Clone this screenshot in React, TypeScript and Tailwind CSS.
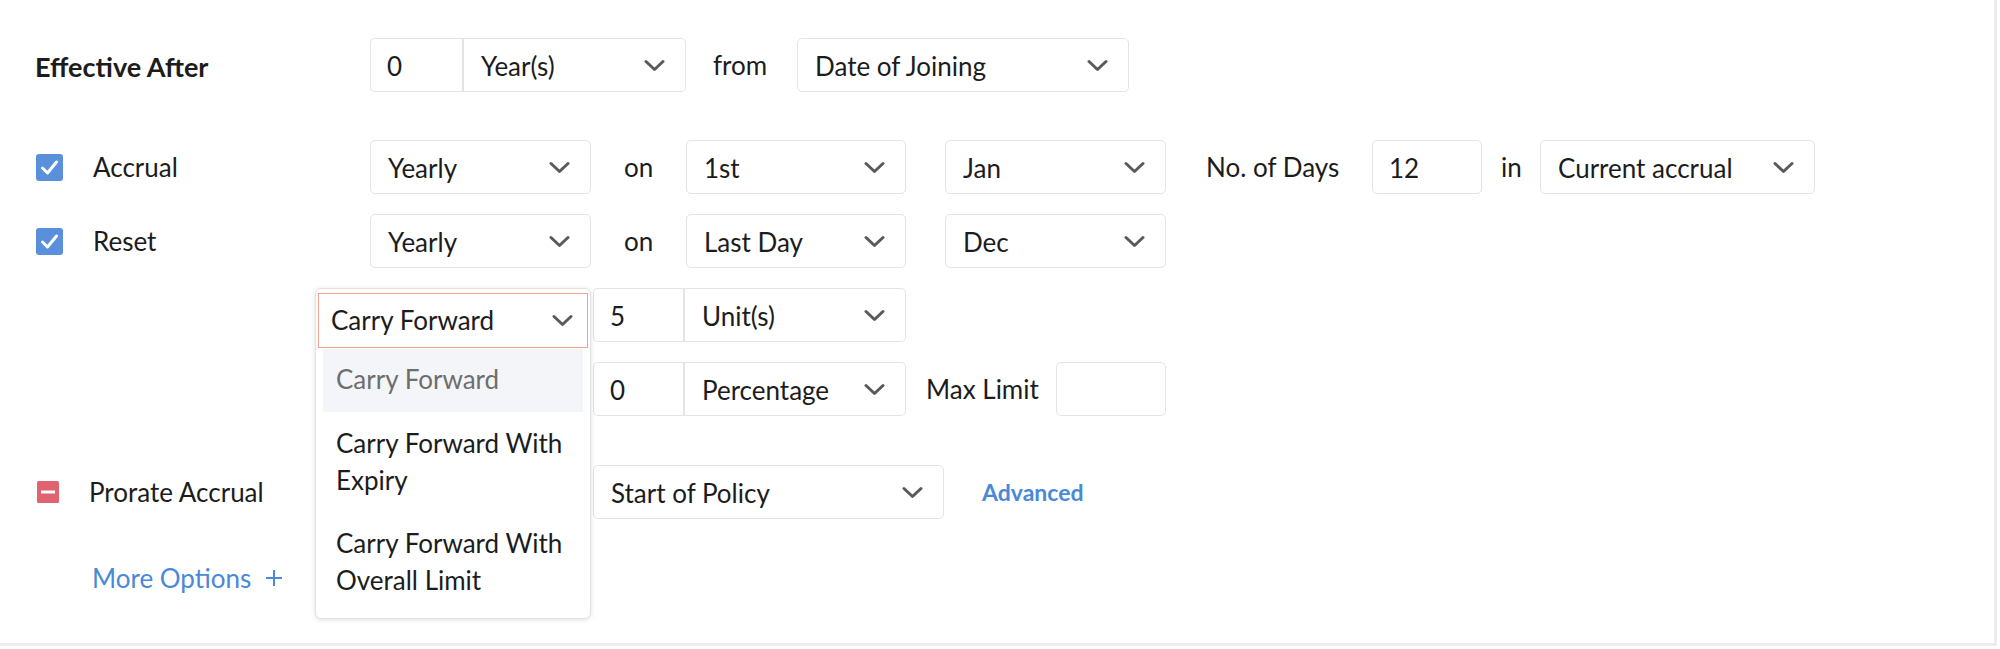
import React from 'react';

const Chevron: React.FC = () => (
  <svg width="21" height="13" viewBox="0 0 21 13" fill="none" className="shrink-0">
    <path d="M2 2.5 L10.5 10.5 L19 2.5" stroke="#5a5a5a" strokeWidth="3" strokeLinecap="round" strokeLinejoin="round" />
  </svg>
);

const Checked: React.FC = () => (
  <svg width="27" height="27" viewBox="0 0 27 27" className="shrink-0">
    <rect x="0" y="0" width="27" height="27" rx="3" fill="#5a8fdc" />
    <path d="M6.5 14 L11.5 19 L20.5 8" stroke="#ffffff" strokeWidth="3" fill="none" strokeLinecap="round" strokeLinejoin="round" />
  </svg>
);

const Minus: React.FC = () => (
  <svg width="22" height="22" viewBox="0 0 22 22" className="shrink-0">
    <rect x="0" y="0" width="22" height="22" rx="1.5" fill="#e0646f" />
    <rect x="4" y="9.5" width="14" height="3" fill="#ffffff" />
  </svg>
);

const Select: React.FC<{ value: string; w: string; joined?: boolean }> = ({ value, w, joined }) => (
  <div
    className={`${w} h-[54px] bg-white border border-[#e4e4e4] flex items-center justify-between pl-[17px] pr-[20px] shrink-0 ${
      joined ? 'rounded-r-[5px] border-l-[2px]' : 'rounded-[5px]'
    }`}
  >
    <span className="whitespace-nowrap pt-[2px]">{value}</span>
    <Chevron />
  </div>
);

const Input: React.FC<{ value?: string; w: string; joined?: boolean }> = ({ value, w, joined }) => (
  <div
    className={`${w} h-[54px] bg-white border border-[#e4e4e4] flex items-center pl-[16px] pt-[2px] shrink-0 ${
      joined ? 'rounded-l-[5px] border-r-0' : 'rounded-[5px]'
    }`}
  >
    {value}
  </div>
);

const Word: React.FC<{ text: string; w: string; pl: string }> = ({ text, w, pl }) => (
  <span className={`${w} ${pl} shrink-0 whitespace-nowrap`}>{text}</span>
);

const CarryForwardMenu: React.FC = () => (
  <div className="absolute left-0 top-0 w-[276px] h-[331px] bg-white border border-[#e2e2e2] rounded-[6px] shadow-[0_1px_5px_rgba(0,0,0,0.12)] z-10 pt-[4px]">
    <div className="mx-[2px] h-[55px] border border-[#f2a091] flex items-center justify-between pl-[12px] pr-[14px]">
      <span className="whitespace-nowrap">Carry Forward</span>
      <Chevron />
    </div>
    <ul className="mx-[7px] mt-[1px] leading-[37px]">
      <li className="bg-[#f4f5f8] text-[#6e6e6e] px-[13px] pt-[12px] pb-[14px] whitespace-nowrap">Carry Forward</li>
      <li className="px-[13px] pt-[13px] pb-[13px] whitespace-nowrap">
        Carry Forward With
        <br />
        Expiry
      </li>
      <li className="px-[13px] pt-[13px] pb-[13px] whitespace-nowrap">
        Carry Forward With
        <br />
        Overall Limit
      </li>
    </ul>
  </div>
);

const App: React.FC = () => {
  return (
    <div className="w-[2000px] h-[649px] bg-white font-[Lato,sans-serif] text-[26px] text-[#1c1c1c]">
      <div className="w-[1997px] h-[646px] border-r-[3px] border-b-[3px] border-[#ececec] pt-[38px]">
        {/* Effective After */}
        <div className="flex items-center h-[54px]">
          <div className="w-[370px] pl-[35px] pt-[5px] font-bold text-[27px] shrink-0">Effective After</div>
          <Input value="0" w="w-[92px]" joined />
          <Select value="Year(s)" w="w-[224px]" joined />
          <Word text="from" w="w-[111px]" pl="pl-[27px]" />
          <Select value="Date of Joining" w="w-[332px]" />
        </div>

        {/* Accrual */}
        <div className="flex items-center h-[54px] mt-[48px]">
          <div className="w-[370px] pl-[36px] flex items-center gap-[30px] shrink-0">
            <Checked />
            <span>Accrual</span>
          </div>
          <Select value="Yearly" w="w-[221px]" />
          <Word text="on" w="w-[95px]" pl="pl-[33px]" />
          <Select value="1st" w="w-[220px]" />
          <div className="w-[39px] shrink-0" />
          <Select value="Jan" w="w-[221px]" />
          <Word text="No. of Days" w="w-[206px]" pl="pl-[40px]" />
          <Input value="12" w="w-[110px]" />
          <Word text="in" w="w-[58px]" pl="pl-[19px]" />
          <Select value="Current accrual" w="w-[275px]" />
        </div>

        {/* Reset */}
        <div className="flex items-center h-[54px] mt-[20px]">
          <div className="w-[370px] pl-[36px] flex items-center gap-[30px] shrink-0">
            <Checked />
            <span>Reset</span>
          </div>
          <Select value="Yearly" w="w-[221px]" />
          <Word text="on" w="w-[95px]" pl="pl-[33px]" />
          <Select value="Last Day" w="w-[220px]" />
          <div className="w-[39px] shrink-0" />
          <Select value="Dec" w="w-[221px]" />
        </div>

        {/* Carry forward */}
        <div className="flex items-center h-[54px] mt-[20px]">
          <div className="w-[315px] shrink-0" />
          <div className="relative w-[276px] h-[54px] shrink-0">
            <CarryForwardMenu />
          </div>
          <div className="w-[2px] shrink-0" />
          <Input value="5" w="w-[90px]" joined />
          <Select value="Unit(s)" w="w-[223px]" joined />
        </div>

        {/* Max carry forward */}
        <div className="flex items-center h-[54px] mt-[20px]">
          <div className="w-[593px] shrink-0" />
          <Input value="0" w="w-[90px]" joined />
          <Select value="Percentage" w="w-[223px]" joined />
          <Word text="Max Limit" w="w-[150px]" pl="pl-[20px]" />
          <Input w="w-[110px]" />
        </div>

        {/* Prorate Accrual */}
        <div className="flex items-center h-[54px] mt-[49px]">
          <div className="w-[593px] pl-[37px] flex items-center gap-[30px] shrink-0">
            <Minus />
            <span>Prorate Accrual</span>
          </div>
          <Select value="Start of Policy" w="w-[351px]" />
          <span className="ml-[38px] font-bold text-[#4a88d8] text-[23px]">Advanced</span>
        </div>

        {/* More Options */}
        <div className="flex items-center h-[54px] mt-[32px] pl-[92px] text-[#4a88d8] gap-[14px]">
          <span>More Options</span>
          <svg width="18" height="18" viewBox="0 0 18 18" className="shrink-0">
            <path d="M9 1 V17 M1 9 H17" stroke="#4a88d8" strokeWidth="2" />
          </svg>
        </div>
      </div>
    </div>
  );
};

export default App;
